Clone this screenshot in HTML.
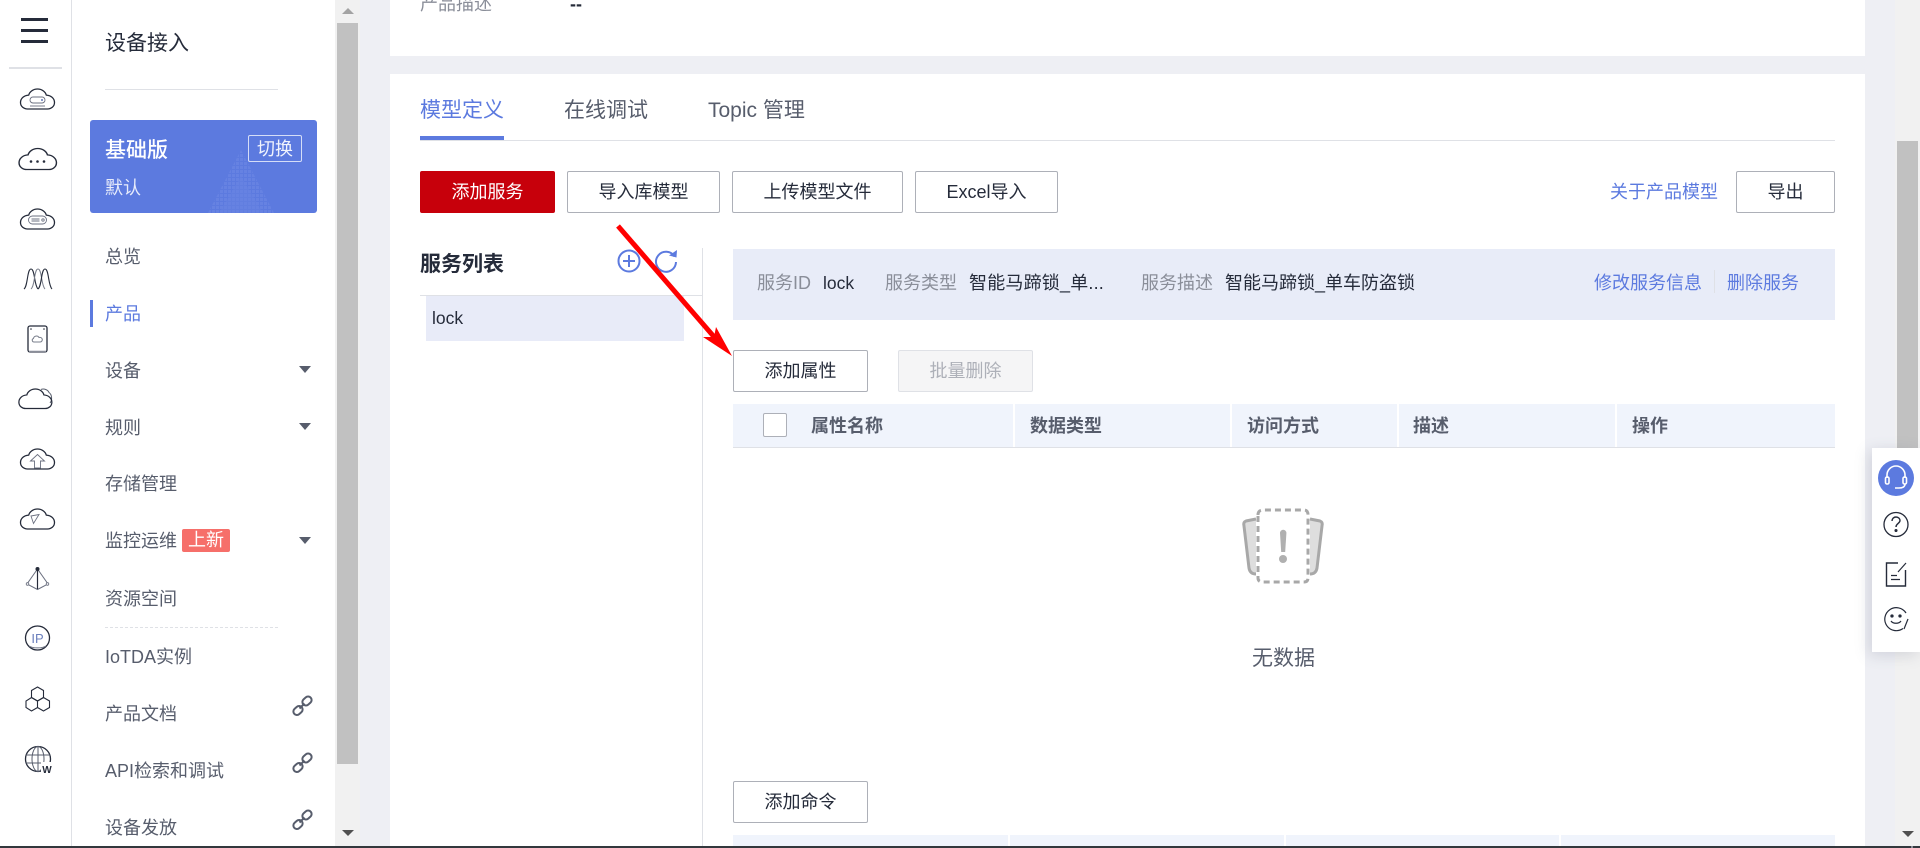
<!DOCTYPE html>
<html lang="zh-CN"><head><meta charset="utf-8"><title>设备接入</title>
<style>
html,body{margin:0;padding:0}
body{width:1920px;height:848px;overflow:hidden;position:relative;background:#eeeff4;font-family:"Liberation Sans","Noto Sans CJK SC",sans-serif;color:#252b3a}
div,span.t{position:absolute;box-sizing:border-box}
.t{white-space:nowrap;line-height:30px;height:30px;font-size:18px}
.s{color:#575d6c}
.b{border:1px solid #adb0b8;border-radius:2px;background:#fff;text-align:center;font-size:18px;line-height:40px;height:42px;top:171px;white-space:nowrap}
.bl{color:#5c7adf}
.g{color:#8a8e99}
.h{font-weight:700;color:#575d6c;top:411px}
.sep{background:#fff;width:2px}
svg{position:absolute;overflow:visible}
.ri{fill:none;stroke:#252b3a;stroke-width:1.3}
.rb{fill:none;stroke:#6b7080;stroke-width:.9}
.tri{width:0;height:0;border-left:6px solid transparent;border-right:6px solid transparent;border-top:7px solid #575d6c;left:299px}
</style></head><body>

<!-- left rail -->
<div style="left:0;top:0;width:72px;height:846px;background:#fff;border-right:1px solid #dfe1e6"></div>
<div style="left:21px;top:18px;width:27px;height:3px;background:#252b3a"></div>
<div style="left:21px;top:29px;width:27px;height:3px;background:#252b3a"></div>
<div style="left:21px;top:40px;width:27px;height:3px;background:#252b3a"></div>
<div style="left:9px;top:67px;width:53px;height:2px;background:#dfe1e6"></div>

<svg style="left:0;top:0" width="72" height="846">
<defs><path id="cl" d="M31 0c-4.500 0-8 3-8.800 6.400-5 .3-8.200 3.800-8.200 7.800 0 4.300 3.500 6.800 7 6.800h20c3.500 0 7-2.500 7-6.800 0-4-3.200-7.500-8.200-7.800C39 3 35.500 0 31 0z" transform="translate(6.500 0)"/></defs>
<!-- 1 -->
<use href="#cl" class="ri" transform="translate(0 89) scale(1 .95)"/>
<rect x="30" y="97" width="15" height="6" rx="3" class="rb"/><path d="M30 106h15" class="rb"/><circle cx="42" cy="100" r="1" fill="#5f74b8"/>
<!-- 2 -->
<use href="#cl" class="ri" transform="translate(-3.500 148.500) scale(1.1 1)"/>
<circle cx="31" cy="161.500" r="1.300" fill="#252b3a"/><circle cx="37.500" cy="161.500" r="1.300" fill="#252b3a"/><circle cx="44" cy="161.500" r="1.300" fill="#252b3a"/>
<!-- 3 -->
<use href="#cl" class="ri" transform="translate(0 209) scale(1 .95)"/>
<rect x="28.500" y="216" width="18" height="8" rx="4" class="rb"/><path d="M31.500 219h8M31.500 221h8" class="rb"/><circle cx="43" cy="220" r="1.200" class="rb"/>
<!-- 4 wave -->
<path d="M24 289c4-3 3-20 7-20s3 16 7 20" fill="none" stroke="#252b3a" stroke-width="1.100"/>
<path d="M31 289c4-3 3-20 7-20s3 16 7 20" fill="none" stroke="#7a7f8c" stroke-width="1"/>
<path d="M38 289c4-3 3-20 7-20s3 16 7 20" fill="none" stroke="#252b3a" stroke-width="1.100"/>
<!-- 5 -->
<rect x="28" y="326" width="19" height="26" rx="2" class="ri"/>
<circle cx="31" cy="329" r=".8" fill="#252b3a"/><circle cx="44" cy="329" r=".8" fill="#252b3a"/>
<path d="M34 342c-2 0-2.500-3-.5-3.500.3-2.500 4-3.500 5.500-1 2.500-.5 4 1.500 3 3.300-.3.8-1 1.200-2 1.200z" fill="none" stroke="#7a7f8c" stroke-width="1"/>
<path d="M29 351.500h17" stroke="#8a8e99" stroke-width="1.500"/>
<!-- 6 -->
<path d="M41 389.500c3-1.500 7 .5 8 3 3 2 3.500 7.500 1 10.500" fill="none" stroke="#575d6c" stroke-width="1"/>
<use href="#cl" class="ri" transform="translate(-1 389) scale(.97 .93)"/>
<!-- 7 -->
<use href="#cl" class="ri" transform="translate(0 449) scale(1 .95)"/>
<path d="M30.500 461l7-6.500 7 6.500h-4v7h-6v-7z" class="rb"/>
<!-- 8 -->
<use href="#cl" class="ri" transform="translate(0 509) scale(1 .95)"/>
<path d="M31 516l8-1.500-5.500 9z" class="rb"/>
<!-- 9 -->
<path d="M37.500 569L27 584l10.500 5.500L48 584z" fill="none" stroke="#6b7080" stroke-width="1"/>
<path d="M37.500 569v20" stroke="#252b3a" stroke-width="1.200"/>
<circle cx="37.500" cy="569" r="2" fill="#252b3a"/>
<circle cx="27.500" cy="584" r="1.300" fill="#fff" stroke="#6b7080" stroke-width=".8"/><circle cx="47.500" cy="584" r="1.300" fill="#fff" stroke="#6b7080" stroke-width=".8"/>
<!-- 10 -->
<circle cx="37.500" cy="638" r="12" class="ri"/>
<text x="37.500" y="643" text-anchor="middle" font-size="13" fill="#6b7fbd" font-family="Liberation Sans">IP</text>
<path d="M29 646c4 2.500 13 2.500 17 0" class="rb"/>
<!-- 11 -->
<path d="M37.500 687l6 3.500v7l-6 3.500-6-3.500v-7z" fill="none" stroke="#252b3a" stroke-width="1.100"/>
<path d="M31.500 697.500l6 3.500v6.500l-6 3.500-5.500-3.500V701zM43.500 697.500l6 3.500v6.500l-6 3.500-6-3.500V701z" fill="none" stroke="#252b3a" stroke-width="1.100"/>
<!-- 12 -->
<circle cx="38" cy="759" r="12.500" class="ri"/>
<ellipse cx="38" cy="759" rx="6" ry="12.500" fill="none" stroke="#575d6c"/>
<path d="M26 755h24M26 763h24M38 746.500v25" stroke="#575d6c" stroke-width="1"/>
<rect x="41" y="762" width="12" height="11" fill="#fff"/>
<text x="47" y="773" text-anchor="middle" font-size="10" font-weight="700" fill="#252b3a" font-family="Liberation Sans">W</text>
</svg>

<!-- sidebar -->
<div style="left:72px;top:0;width:263px;height:846px;background:#fff"></div>
<span class="t" style="left:105px;top:29px;font-size:21px">设备接入</span>
<div style="left:105px;top:89px;width:173px;height:1px;background:#dfe1e6"></div>
<div style="left:90px;top:120px;width:227px;height:93px;background:#5c7adf;border-radius:3px;overflow:hidden">
<svg style="left:118px;top:30px" width="66" height="63"><defs><pattern id="dp" width="4" height="4" patternUnits="userSpaceOnUse"><rect width="3" height="3" fill="#6682e2"/></pattern></defs><path d="M33 0L66 63H0z" fill="url(#dp)"/><path d="M33 26L55 63H11z" fill="#6682e2" opacity=".5"/></svg>
</div>
<span class="t" style="left:105px;top:136px;font-size:21px;color:#fff;font-weight:500">基础版</span>
<div style="left:248px;top:135px;width:54px;height:27px;border:1px solid #d5ddf7;border-radius:2px;color:#f0f3fd;font-size:18px;line-height:26px;text-align:center">切换</div>
<span class="t" style="left:105px;top:173px;color:#e6ebfb">默认</span>

<span class="t s" style="left:105px;top:242px">总览</span>
<div style="left:90px;top:300px;width:3px;height:27px;background:#5c7adf"></div>
<span class="t" style="left:105px;top:299px;color:#5c7adf">产品</span>
<span class="t s" style="left:105px;top:356px">设备</span><div class="tri" style="top:366px"></div>
<span class="t s" style="left:105px;top:413px">规则</span><div class="tri" style="top:423px"></div>
<span class="t s" style="left:105px;top:469px">存储管理</span>
<span class="t s" style="left:105px;top:526px">监控运维</span>
<div style="left:182px;top:529px;width:48px;height:23px;background:#f66f6a;border-radius:2px;color:#fff;font-size:18px;line-height:22px;text-align:center">上新</div>
<div class="tri" style="top:537px"></div>
<span class="t s" style="left:105px;top:584px">资源空间</span>
<div style="left:105px;top:627px;width:173px;border-top:1px dashed #dfe1e6"></div>
<span class="t s" style="left:105px;top:642px">IoTDA实例</span>
<span class="t s" style="left:105px;top:699px">产品文档</span>
<span class="t s" style="left:105px;top:756px">API检索和调试</span>
<span class="t s" style="left:105px;top:813px">设备发放</span>
<svg style="left:292px;top:696px" width="20" height="20"><g id="lk" fill="none" stroke="#575d6c" stroke-width="2"><rect x="10" y="1.500" width="10" height="7" rx="3.500" transform="rotate(-42 15 5)"/><rect x="1" y="11" width="10" height="7" rx="3.500" transform="rotate(-42 6 14.500)"/><path d="M7.500 12.500l5-5"/></g></svg>
<svg style="left:292px;top:753px" width="20" height="20"><use href="#lk"/></svg>
<svg style="left:292px;top:810px" width="20" height="20"><use href="#lk"/></svg>

<!-- sidebar scrollbar -->
<div style="left:335px;top:0;width:25px;height:846px;background:#f1f1f1"></div>
<div style="left:337px;top:23px;width:21px;height:741px;background:#c1c1c1"></div>
<div style="left:342px;top:8px;width:0;height:0;border-left:6px solid transparent;border-right:6px solid transparent;border-bottom:6px solid #a3a3a3"></div>
<div style="left:342px;top:830px;width:0;height:0;border-left:6px solid transparent;border-right:6px solid transparent;border-top:6px solid #505050"></div>

<!-- panels -->
<div style="left:390px;top:0;width:1475px;height:56px;background:#fff"></div>
<div style="left:390px;top:74px;width:1475px;height:772px;background:#fff"></div>
<span class="t g" style="left:420px;top:-11px">产品描述</span>
<span class="t" style="left:570px;top:-11px;font-weight:700">--</span>

<!-- tabs -->
<span class="t bl" style="left:420px;top:96px;font-size:21px">模型定义</span>
<span class="t s" style="left:564px;top:96px;font-size:21px">在线调试</span>
<span class="t s" style="left:708px;top:96px;font-size:21px">Topic 管理</span>
<div style="left:420px;top:140px;width:1415px;height:1px;background:#dfe1e6"></div>
<div style="left:420px;top:136px;width:84px;height:4px;background:#5c7adf"></div>

<!-- buttons -->
<div class="b" style="left:420px;width:135px;background:#c7000b;border-color:#c7000b;color:#fff">添加服务</div>
<div class="b" style="left:567px;width:153px">导入库模型</div>
<div class="b" style="left:732px;width:171px">上传模型文件</div>
<div class="b" style="left:915px;width:143px">Excel导入</div>
<span class="t bl" style="left:1610px;top:177px">关于产品模型</span>
<div class="b" style="left:1736px;width:99px">导出</div>

<!-- service list -->
<span class="t" style="left:420px;top:250px;font-size:21px;font-weight:700">服务列表</span>
<svg style="left:610px;top:243px" width="70" height="36" fill="none" stroke="#5c7adf" stroke-width="2">
<circle cx="19" cy="18" r="10.500"/><path d="M13 18h12M19 12v12"/>
<path d="M64.500 13.500A10 10 0 1 0 66 19"/><path d="M59 12.500l7.500 2 .5-7.500z" fill="#5c7adf" stroke="none"/>
</svg>
<div style="left:702px;top:248px;width:1px;height:598px;background:#dfe1e6"></div>
<div style="left:420px;top:295px;width:282px;height:1px;background:#dfe1e6"></div>
<div style="left:426px;top:296px;width:258px;height:45px;background:#e8ebf8"></div>
<span class="t" style="left:432px;top:303px;font-size:17.500px">lock</span>

<!-- info bar -->
<div style="left:733px;top:249px;width:1102px;height:71px;background:#e8ecf8"></div>
<span class="t g" style="left:757px;top:268px">服务ID</span>
<span class="t" style="left:823px;top:268px;font-size:17.500px">lock</span>
<span class="t g" style="left:885px;top:268px">服务类型</span>
<span class="t" style="left:969px;top:268px;letter-spacing:.2px">智能马蹄锁_单...</span>
<span class="t g" style="left:1141px;top:268px">服务描述</span>
<span class="t" style="left:1225px;top:268px">智能马蹄锁_单车防盗锁</span>
<span class="t bl" style="left:1594px;top:268px">修改服务信息</span>
<div style="left:1714px;top:270px;width:1px;height:23px;background:#dfe1e6"></div>
<span class="t bl" style="left:1727px;top:268px">删除服务</span>

<!-- attr table -->
<div class="b" style="left:733px;top:350px;width:135px;line-height:41px">添加属性</div>
<div class="b" style="left:898px;top:350px;width:135px;line-height:41px;background:#f5f5f6;border-color:#dfe1e6;color:#adb0b8">批量删除</div>
<div style="left:733px;top:404px;width:1102px;height:44px;background:#f0f4fc;border-bottom:1px solid #dfe1e6"></div>
<div class="sep" style="left:1013px;top:404px;height:43px"></div>
<div class="sep" style="left:1230px;top:404px;height:43px"></div>
<div class="sep" style="left:1397px;top:404px;height:43px"></div>
<div class="sep" style="left:1615px;top:404px;height:43px"></div>
<div style="left:763px;top:413px;width:24px;height:24px;background:#fff;border:1px solid #adb0b8;border-radius:2px"></div>
<span class="t h" style="left:811px">属性名称</span>
<span class="t h" style="left:1030px">数据类型</span>
<span class="t h" style="left:1247px">访问方式</span>
<span class="t h" style="left:1413px">描述</span>
<span class="t h" style="left:1632px">操作</span>

<!-- empty -->
<svg style="left:1243px;top:508px" width="80" height="76" fill="none">
<path d="M13 11L3 13Q0 14 1 18L6 60Q7 66 13 66" stroke="#a8a8a8" stroke-width="3" fill="#dedede"/>
<path d="M67 11L77 13Q80 14 79 18L74 60Q73 66 67 66" stroke="#a8a8a8" stroke-width="3" fill="#dedede"/>
<path d="M15 4Q15 1 19 1H61Q65 1 65 4V70L61 74H19L15 70z" fill="#fff" transform="translate(0 1)"/>
<path d="M15 7Q15 2 20 2H61Q65 2 65 7V70Q65 74 61 74H20Q15 74 15 70z" stroke="#a8a8a8" stroke-width="3" stroke-dasharray="6 4"/>
<path d="M37 25a3.200 3.200 0 0 1 6.400 0l-1.200 19h-4z" fill="#b0b0b0"/><circle cx="40" cy="51" r="4" fill="#b0b0b0"/>
</svg>
<span class="t s" style="left:1252px;top:644px;font-size:21px">无数据</span>

<!-- command -->
<div class="b" style="left:733px;top:781px;width:135px">添加命令</div>
<div style="left:733px;top:835px;width:1102px;height:11px;background:#f0f4fc"></div>
<div class="sep" style="left:1008px;top:835px;height:11px"></div>
<div class="sep" style="left:1284px;top:835px;height:11px"></div>
<div class="sep" style="left:1559px;top:835px;height:11px"></div>

<!-- arrow -->
<svg style="left:0;top:0" width="1920" height="848"><path d="M618 226L722 346" stroke="#f00" stroke-width="5" fill="none"/><path d="M732 356L703 337 714 337 716 327z" fill="#f00"/></svg>

<!-- main scrollbar -->
<div style="left:1895px;top:0;width:25px;height:846px;background:#f1f1f1"></div>
<div style="left:1897px;top:141px;width:21px;height:330px;background:#c1c1c1"></div>
<div style="left:1902px;top:831px;width:0;height:0;border-left:6px solid transparent;border-right:6px solid transparent;border-top:6px solid #505050"></div>

<!-- float panel -->
<div style="left:1872px;top:448px;width:48px;height:204px;background:#fff;box-shadow:-3px 3px 14px rgba(90,95,120,.2)"></div>
<svg style="left:1872px;top:448px" width="48" height="204" fill="none" stroke="#252b3a" stroke-width="1.300">
<circle cx="24" cy="30" r="18" fill="#5c7adf" stroke="none"/>
<g stroke="#fff" stroke-width="1.600"><path d="M15 30v-3a9 9 0 0 1 18 0v3"/><rect x="13.500" y="29" width="3.500" height="7" rx="1.500"/><rect x="31" y="29" width="3.500" height="7" rx="1.500"/><path d="M33 36c0 3-3 4-6 4h-4"/></g>
<circle cx="24" cy="76.500" r="12"/>
<path d="M20 73c0-2.500 2-4 4-4 2.500 0 4 1.700 4 3.500 0 3-4 3-4 6.500" stroke-width="1.400"/><circle cx="24" cy="82.500" r=".9" fill="#252b3a"/>
<path d="M26 115H14.500v23h19V122" stroke-width="1.400"/><path d="M19 127.500h6M19 131.500h9" stroke-width="1.200"/><path d="M26 124l8-9" stroke-width="1.200"/>
<path d="M34 165a11.500 11.500 0 1 0-3 15.500" stroke-width="1.200"/><path d="M32 181l4-10" stroke-width="1.200"/><circle cx="20" cy="168" r="1" fill="#252b3a"/><circle cx="28" cy="168" r="1" fill="#252b3a"/><path d="M19 173c2 3 8 3 10 0" stroke-width="1.200"/>
</svg>

<!-- bottom bar -->
<div style="left:0;top:846px;width:1920px;height:2px;background:#33383d"></div>
<div style="left:1911px;top:846px;width:2px;height:2px;background:#8a8e99"></div>
</body></html>
